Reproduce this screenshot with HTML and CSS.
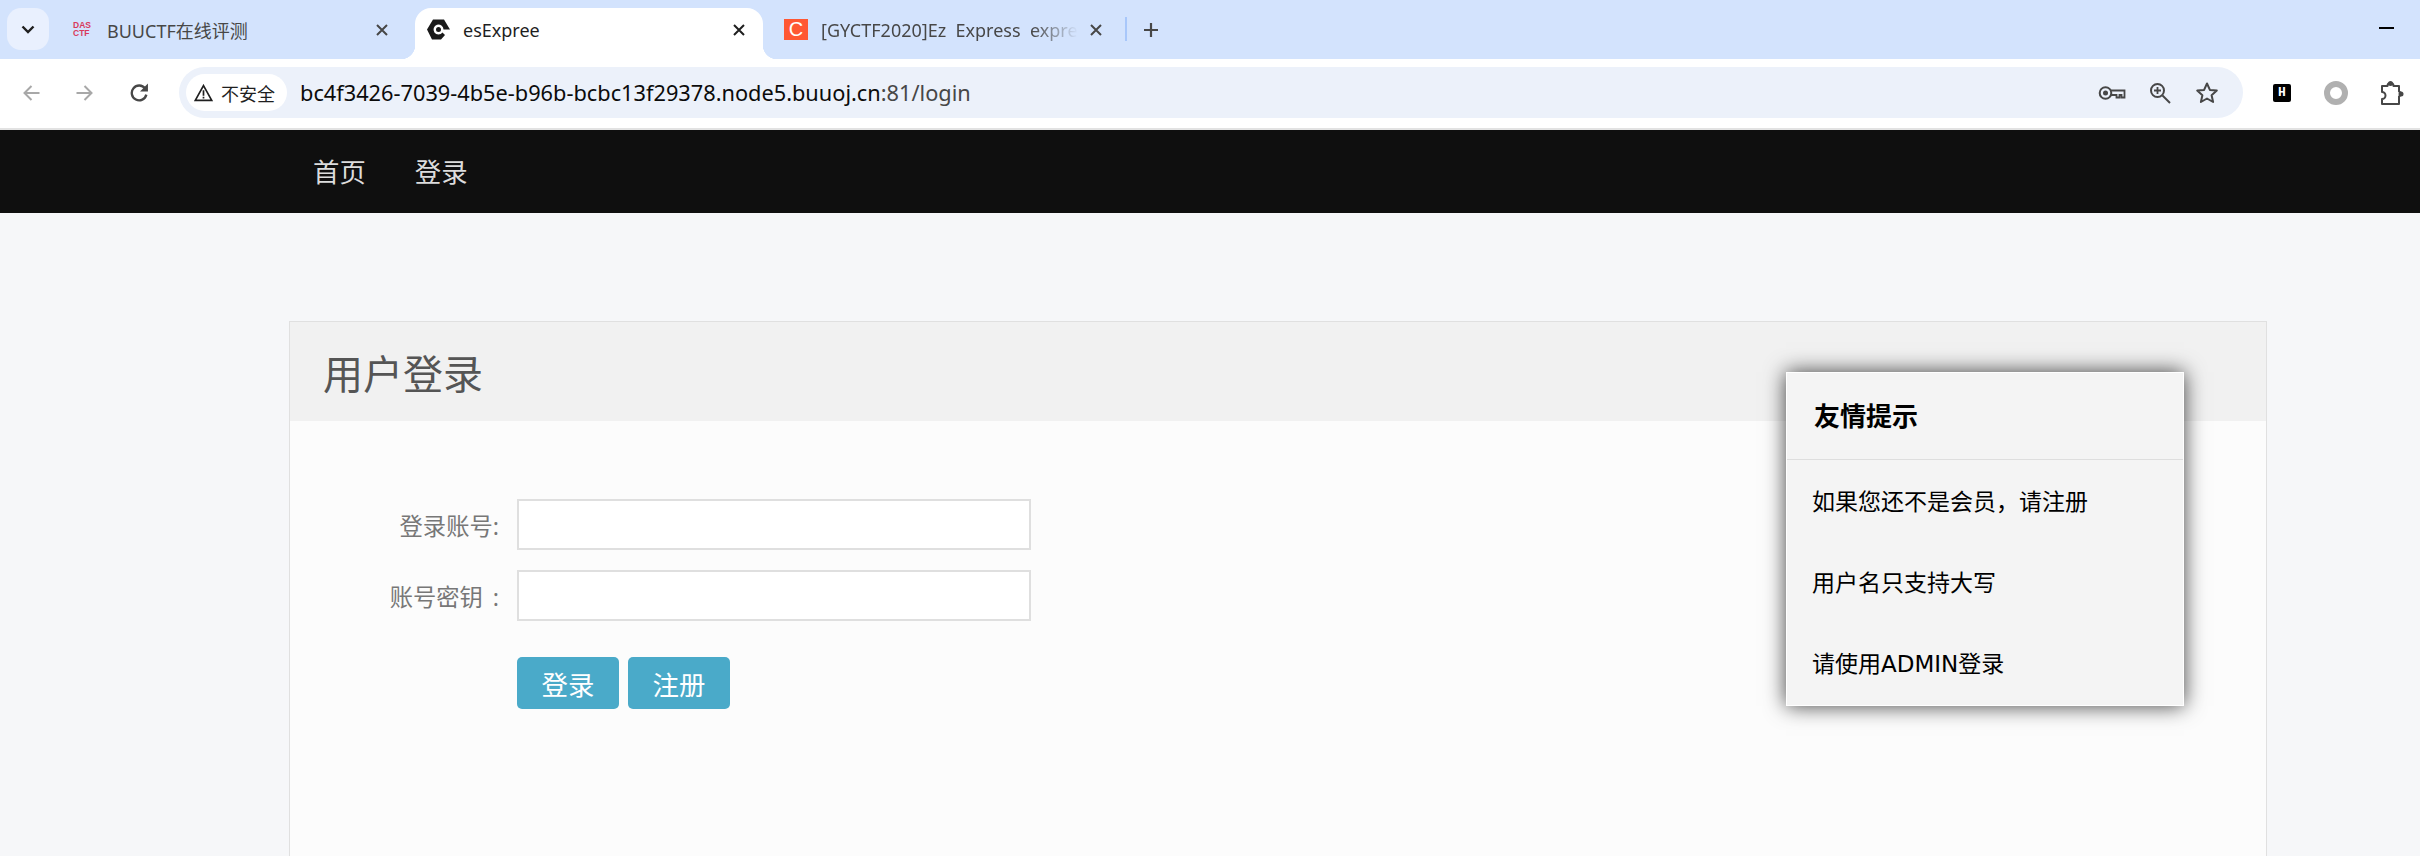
FILE: index.html
```html
<!DOCTYPE html>
<html lang="zh-CN">
<head>
    <meta charset="UTF-8">
    <meta name="viewport" content="width=device-width, initial-scale=1.0">
    <title>esExpree</title>
    <link rel="stylesheet" href="styles.css">
</head>
<body>
    <div class="tabbar">
        <div class="tab-search">
            <svg width="18" height="18" viewBox="0 0 18 18"><path d="M3.500 6.500 9 12l5.500-5.500" fill="none" stroke="#1f1f1f" stroke-width="2.400"/></svg>
        </div>
        <div class="tab tab-one">
            <div class="fav-buu"><span>DAS</span><span>CTF</span></div>
            <span class="tab-title">BUUCTF在线评测</span>
            <svg class="tab-close" width="14" height="14" viewBox="0 0 14 14"><path d="M2 2l10 10M12 2 2 12" stroke="#474747" stroke-width="2"/></svg>
        </div>
        <div class="tab tab-active">
            <svg class="fav-es" width="24" height="21" viewBox="0 0 24 21">
                <path d="M0 10.500 6 .5H17l6 10H16.500A5 5 0 1 0 15.500 13.500L18 16l-4 4.500H5z" fill="#1a1a1a"/>
                <circle cx="11.500" cy="10.500" r="2.500" fill="#1a1a1a"/>
            </svg>
            <span class="tab-title">esExpree</span>
            <svg class="tab-close" width="14" height="14" viewBox="0 0 14 14"><path d="M2 2l10 10M12 2 2 12" stroke="#1f1f1f" stroke-width="2"/></svg>
        </div>
        <div class="tab tab-three">
            <div class="fav-c">C</div>
            <span class="tab-title tab-fade">[GYCTF2020]Ez&nbsp;&nbsp;Express&nbsp;&nbsp;expre</span>
            <svg class="tab-close" width="14" height="14" viewBox="0 0 14 14"><path d="M2 2l10 10M12 2 2 12" stroke="#474747" stroke-width="2"/></svg>
        </div>
        <div class="tab-sep"></div>
        <svg class="tab-new" width="16" height="16" viewBox="0 0 16 16"><path d="M8 1v14M1 8h14" stroke="#474747" stroke-width="2.200"/></svg>
        <div class="win-min"></div>
    </div>

    <div class="toolbar">
        <svg class="tool" width="19" height="18" viewBox="0 0 18 18"><path d="M17 9H2.500M9 2 2 9l7 7" fill="none" stroke="#a8a8a8" stroke-width="2"/></svg>
        <svg class="tool tool-fwd" width="19" height="18" viewBox="0 0 18 18"><path d="M1 9h14.500M9 2l7 7-7 7" fill="none" stroke="#a8a8a8" stroke-width="2"/></svg>
        <svg class="tool tool-reload" width="19" height="19" viewBox="0 0 18 18"><path d="M15.500 11a7 7 0 1 1-1.200-5.800" fill="none" stroke="#474747" stroke-width="2.200"/><path d="M17 .5v7.500H9.500z" fill="#474747"/></svg>
        <div class="omnibox">
            <div class="chip">
                <svg width="19" height="18" viewBox="0 0 18 17"><path d="M9 1.500 16.800 15.500H1.200z" fill="none" stroke="#1f1f1f" stroke-width="1.600"/><path d="M9 6v5M9 12v1.800" stroke="#1f1f1f" stroke-width="1.600"/></svg>
                <span>不安全</span>
            </div>
            <div class="url">bc4f3426-7039-4b5e-b96b-bcbc13f29378.node5.buuoj.cn<span class="url-dim">:81/login</span></div>
            <svg class="omni-key" width="28" height="16" viewBox="0 0 28 16"><circle cx="7.500" cy="8" r="5.800" fill="none" stroke="#474747" stroke-width="2"/><circle cx="7.500" cy="8" r="2.500" fill="#474747"/><path d="M13 5.500h13.500v7h-3v-2.500h-2v2.500h-3v-2.500H13" fill="none" stroke="#474747" stroke-width="1.800"/></svg>
            <svg class="omni-zoom" width="22" height="22" viewBox="0 0 22 22"><circle cx="8.500" cy="8.500" r="6.500" fill="none" stroke="#474747" stroke-width="2"/><path d="M13.500 13.500 21 21" stroke="#474747" stroke-width="2"/><path d="M8.500 5v7M5 8.500h7" stroke="#474747" stroke-width="1.800"/></svg>
            <svg class="omni-star" width="24" height="23" viewBox="0 0 24 23"><path d="M12 2.500l2.900 6.400 6.900.7-5.200 4.600 1.500 6.800-6.100-3.500-6.100 3.500 1.500-6.800L2.200 9.600l6.900-.7z" fill="none" stroke="#474747" stroke-width="2" stroke-linejoin="round"/></svg>
        </div>
        <div class="ext-h">H</div>
        <div class="ext-ring"></div>
        <svg class="ext-puzzle" width="24" height="26" viewBox="0 0 24 26"><path d="M2 6h5.500a3 3 0 0 1 6 0H19v5.500a2.600 2.600 0 0 1 0 5V24H2v-5a3 3 0 0 0 0-7z" fill="none" stroke="#474747" stroke-width="2" stroke-linejoin="round"/><circle cx="10.500" cy="3.500" r="2.500" fill="#474747"/><circle cx="21" cy="14" r="2.500" fill="#474747"/></svg>
    </div>

    <nav class="navbar">
        <a href="#">首页</a>
        <a href="#">登录</a>
    </nav>

    <div class="page">
        <div class="panel">
            <div class="panel-head">用户登录</div>
            <form class="login-form">
                <label for="account">登录账号:</label>
                <input type="text" id="account">
                <label for="secret">账号密钥&nbsp;&#8201;:</label>
                <input type="password" id="secret">
                <div class="form-btns">
                    <button type="button">登录</button>
                    <button type="button">注册</button>
                </div>
            </form>
        </div>
        <div class="tips">
            <div class="tips-head">友情提示</div>
            <p>如果您还不是会员&#65292;请注册</p>
            <p>用户名只支持大写</p>
            <p>请使用ADMIN登录</p>
        </div>
    </div>
</body>
</html>
```

FILE: styles.css
```css
* { box-sizing: border-box; }
html, body { height: 100%; }
body { margin: 0; overflow: hidden; background: #f6f7f9; font-family: "Noto Sans", "Noto Sans CJK SC", sans-serif; }

.tabbar { display: flex; align-items: flex-end; height: 59px; background: #d3e3fd; }
.tab-search { flex: none; display: flex; align-items: center; justify-content: center; width: 42px; height: 42px; margin: 0 0 9px 7px; background: #e9f0fe; border-radius: 14px; }
.tab { flex: none; display: flex; align-items: center; height: 51px; padding-bottom: 8px; font-size: 18px; color: #474747; }
.tab-title { white-space: nowrap; }
.tab-close { flex: none; margin-left: auto; }
.tab-one { width: 366px; padding: 0 26px 8px 24px; }
.tab-one .tab-title { margin-left: 16px; }
.fav-buu { display: flex; flex-direction: column; width: 18px; font: bold 8.500px/7.500px "Liberation Sans", sans-serif; color: #d83a5c; }
.tab-active { position: relative; width: 348px; padding: 0 17px 8px 12px; background: #fff; color: #1f1f1f; border-radius: 16px 16px 0 0; }
.tab-active .tab-title { margin-left: 12px; }
.tab-active::before, .tab-active::after { content: ""; position: absolute; bottom: 0; width: 14px; height: 14px; }
.tab-active::before { left: -14px; background: radial-gradient(circle at 0 0, transparent 14px, #fff 14.500px); }
.tab-active::after { right: -14px; background: radial-gradient(circle at 100% 0, transparent 14px, #fff 14.500px); }
.tab-three { width: 357px; padding: 0 17px 8px 21px; }
.fav-c { flex: none; width: 24px; height: 21px; background: #ff5733; color: #fff; font: 20px/21px "Liberation Sans", sans-serif; text-align: center; }
.tab-fade { margin-left: 13px; -webkit-mask-image: linear-gradient(to right, #000 82%, transparent); mask-image: linear-gradient(to right, #000 82%, transparent); }
.tab-sep { flex: none; width: 2px; height: 24px; margin: 0 0 18px 5px; background: #a8c7fa; }
.tab-new { flex: none; margin: 0 0 21px 16px; }
.win-min { flex: none; width: 15px; height: 2px; margin: 0 26px 30px auto; background: #000; }

.toolbar { display: flex; align-items: center; height: 71px; padding-bottom: 2px; background: #fff; border-bottom: 2px solid #e2e2e2; }
.tool { flex: none; margin-left: 22px; }
.tool-fwd { margin-left: 34px; }
.tool-reload { margin-left: 36px; }
.omnibox { flex: none; display: flex; align-items: center; width: 2064px; height: 51px; margin-left: 30px; padding: 0 24px 0 7px; background: #ecf1fa; border-radius: 26px; }
.chip { display: flex; align-items: center; gap: 8px; width: 101px; height: 37px; padding-left: 8px; background: #fff; border-radius: 19px; font-size: 18px; color: #1f1f1f; white-space: nowrap; }
.url { margin-left: 13px; font-size: 21.750px; color: #0b0b0b; white-space: nowrap; }
.url-dim { color: #474747; }
.omni-key { margin-left: auto; }
.omni-zoom { margin-left: 23px; }
.omni-star { margin-left: 24px; }
.ext-h { flex: none; width: 18px; height: 18px; margin-left: 30px; background: #000; color: #fff; border-radius: 2px; font: bold 13px/18px "Liberation Mono", monospace; text-align: center; }
.ext-ring { flex: none; width: 24px; height: 24px; margin-left: 33px; border: 6px solid #b0b0b0; border-radius: 50%; }
.ext-puzzle { flex: none; margin-left: 32px; }

.navbar { display: flex; gap: 49px; height: 83px; align-items: center; padding: 0 0 2px 313px; background: #0f0f0f; }
.navbar a { color: #dcdcdc; font-size: 26.400px; text-decoration: none; }

.page { position: relative; padding: 108px 153px 0 289px; }
.panel { height: 536px; background: #fcfcfc; border: 1px solid #e0e0e0; }
.panel-head { height: 99px; padding: 4px 0 0 33px; background: #f1f1f1; color: #555; font-size: 40px; line-height: 95px; }
.login-form { display: grid; grid-template-columns: 227px 514px; grid-auto-rows: 51px; row-gap: 20px; align-items: center; padding-top: 78px; }
.login-form label { padding-right: 18px; color: #777; font-size: 23.300px; text-align: right; white-space: nowrap; }
.login-form input { width: 514px; height: 51px; background: #fff; border: 2px solid #dfdfdf; }
.form-btns { grid-column: 2; align-self: start; display: flex; gap: 9px; margin-top: 16px; }
.form-btns button { width: 102px; height: 52px; padding: 0; background: #4aaac9; border: none; border-radius: 5px; color: #fff; font-family: inherit; font-size: 26.400px; }

.tips { position: absolute; top: 159px; left: 1786px; width: 398px; height: 334px; background: #f4f4f4; border: 1px solid #fff; box-shadow: 0 0 20px rgba(0, 0, 0, 0.75); color: #000; font-family: "DejaVu Sans", "Noto Sans CJK SC", sans-serif; }
.tips-head { height: 87px; padding-left: 27px; border-bottom: 1px solid #dedede; font-family: "Noto Sans CJK SC", sans-serif; font-size: 26px; font-weight: bold; line-height: 84px; }
.tips p { margin: 0; padding: 2px 0 0 25px; font-size: 23px; height: 81px; line-height: 81px; }
```
